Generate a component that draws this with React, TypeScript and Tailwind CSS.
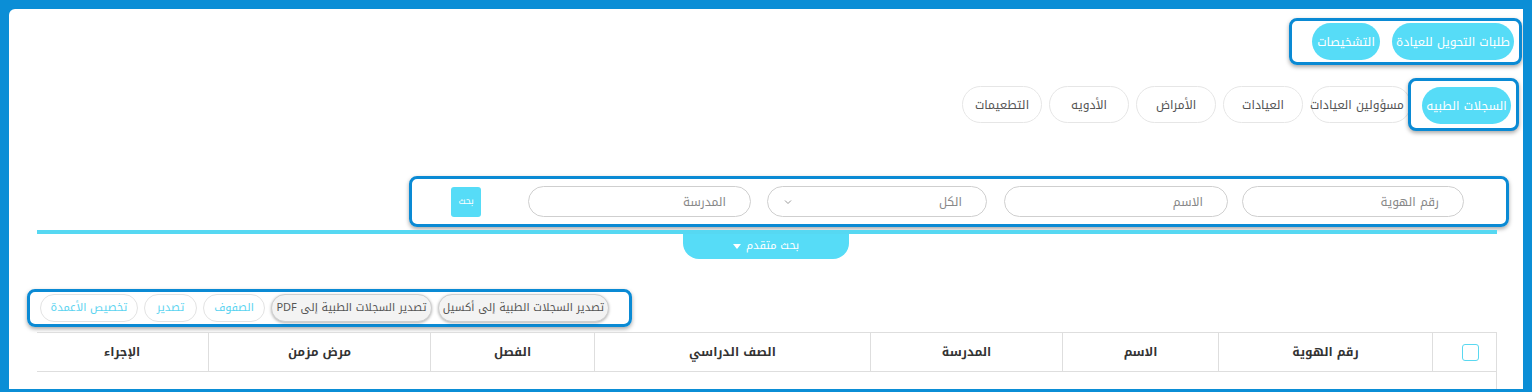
const cyanPill =
  "h-[37px] shrink-0 whitespace-nowrap rounded-full bg-[#56dcf7] text-white flex items-center justify-center text-[12px]";
const whitePill =
  "h-[37px] shrink-0 whitespace-nowrap rounded-full border border-[#e6e6e6] bg-white text-[#555] flex items-center justify-center text-[12px]";
const hiBox =
  "border-[3px] border-[#0a8ad4] rounded-[8px] shadow-[0_2px_4px_rgba(0,0,0,0.35)]";
const field =
  "h-[31px] shrink-0 whitespace-nowrap rounded-full border border-[#cfcfcf] bg-white flex items-center pr-[24px] text-[12px] text-[#888]";
const grayBtn =
  "flex h-[28px] shrink-0 items-center justify-center whitespace-nowrap rounded-full border border-[#cfcfcf] bg-[#f3f3f3] text-[11px] text-[#555] shadow-[0_1px_3px_rgba(0,0,0,0.3)]";
const lightBtn =
  "flex h-[28px] shrink-0 items-center justify-center whitespace-nowrap rounded-full border border-[#e3e3e3] bg-white text-[11px] text-[#5ad3f0]";

const columns = [
  { label: "رقم الهوية" },
  { label: "الاسم" },
  { label: "المدرسة" },
  { label: "الصف الدراسي" },
  { label: "الفصل" },
  { label: "مرض مزمن" },
  { label: "الإجراء" },
];

export default function App() {
  return (
    <div className="h-[392px] w-full overflow-hidden bg-[#0b8ed6] pt-[9px] pl-[9px] pr-[9px] pb-[3px] font-['Noto_Kufi_Arabic','Noto_Sans_Arabic','DejaVu_Sans',sans-serif]">
      <div dir="rtl" className="flex h-full flex-col overflow-hidden rounded-tl-[6px] bg-white">
        {/* top tabs */}
        <div className="mt-[9px] flex shrink-0 pr-[1px]">
          <div className={`${hiBox} flex gap-[12px] py-[2px] pr-[5px] pl-[20px]`}>
            <div className={`${cyanPill} w-[122px]`}>طلبات التحويل للعيادة</div>
            <div className={`${cyanPill} w-[68px]`}>التشخيصات</div>
          </div>
        </div>

        {/* section tabs */}
        <div className="mt-[13px] flex shrink-0 items-center pr-[4px]">
          <div className={`${hiBox} relative z-10 bg-white pt-[6px] pb-[4px] pr-[5px] pl-[11px]`}>
            <div className={`${cyanPill} w-[89px]`}>السجلات الطبيه</div>
          </div>
          <div className={`${whitePill} -mr-[3px] w-[100px] justify-start pr-[6px]`}>
            مسؤولين العيادات
          </div>
          <div className="mr-[8px] flex gap-[7px]">
            <div className={`${whitePill} w-[80px]`}>العيادات</div>
            <div className={`${whitePill} w-[80px]`}>الأمراض</div>
            <div className={`${whitePill} w-[80px]`}>الأدويه</div>
            <div className={`${whitePill} w-[80px]`}>التطعيمات</div>
          </div>
        </div>

        {/* search */}
        <div className="mt-[45px] flex shrink-0 pr-[14px]">
          <div className={`${hiBox} flex w-[1100px] items-center py-[7px] pr-[42px]`}>
            <div className={`${field} w-[222px]`}>رقم الهوية</div>
            <div className={`${field} mr-[14px] w-[224px]`}>الاسم</div>
            <div className={`${field} mr-[17px] w-[220px] justify-between pl-[16px]`}>
              <span>الكل</span>
              <svg width="8" height="6" viewBox="0 0 8 6" fill="none">
                <path d="M1 1.5 4 4.5 7 1.5" stroke="#999" strokeWidth="1" />
              </svg>
            </div>
            <div className={`${field} mr-[16px] w-[223px]`}>المدرسة</div>
            <div className="mr-[47px] flex h-[30px] w-[30px] shrink-0 items-center justify-center rounded-[3px] bg-[#56dcf7] text-[9px] text-white">
              بحث
            </div>
          </div>
        </div>

        <div className="mt-[3px] mr-[26px] ml-[28px] h-[4px] shrink-0 bg-[#56d8f2]" />
        <div className="mx-auto flex h-[25px] w-[166px] shrink-0 items-center justify-center gap-[5px] rounded-b-[16px] bg-[#56dcf7] text-[11px] text-white">
          <span>بحث متقدم</span>
          <svg width="8" height="5" viewBox="0 0 8 5">
            <path d="M0 0h8L4 5z" fill="#fff" />
          </svg>
        </div>

        {/* export buttons */}
        <div className="mt-[30px] flex shrink-0 justify-end pl-[18px]">
          <div className={`${hiBox} flex w-[605px] items-center gap-[6px] py-[2px] pr-[20px] pl-[7px]`}>
            <div className={`${grayBtn} w-[171px]`}>تصدير السجلات الطبية إلى أكسيل</div>
            <div className={`${grayBtn} w-[161px]`}>تصدير السجلات الطبية إلى PDF</div>
            <div className={`${lightBtn} w-[62px]`}>الصفوف</div>
            <div className={`${lightBtn} w-[53px]`}>تصدير</div>
            <div className={`${lightBtn} w-[98px]`}>تخصيص الأعمدة</div>
          </div>
        </div>

        {/* table */}
        <div className="mt-[5px] mr-[26px] ml-[28px] shrink-0 border-t border-r border-[#dedede]">
          <div className="grid h-[39px] grid-cols-[64px_214px_156px_192px_276px_164px_222px_172px] border-b border-[#dedede]">
            <div className="flex items-center justify-center border-l border-[#dedede] pl-[12px]">
              <div className="h-[17px] w-[17px] rounded-[3px] border-[1.5px] border-[#5ad8f0]" />
            </div>
            {columns.map((c, i) => (
              <div
                key={c.label}
                className={`flex items-center justify-center whitespace-nowrap text-[12px] font-bold text-[#333] ${
                  i < columns.length - 1 ? "border-l border-[#dedede]" : ""
                }`}
              >
                {c.label}
              </div>
            ))}
          </div>
          <div className="h-[30px]" />
        </div>
      </div>
    </div>
  );
}
